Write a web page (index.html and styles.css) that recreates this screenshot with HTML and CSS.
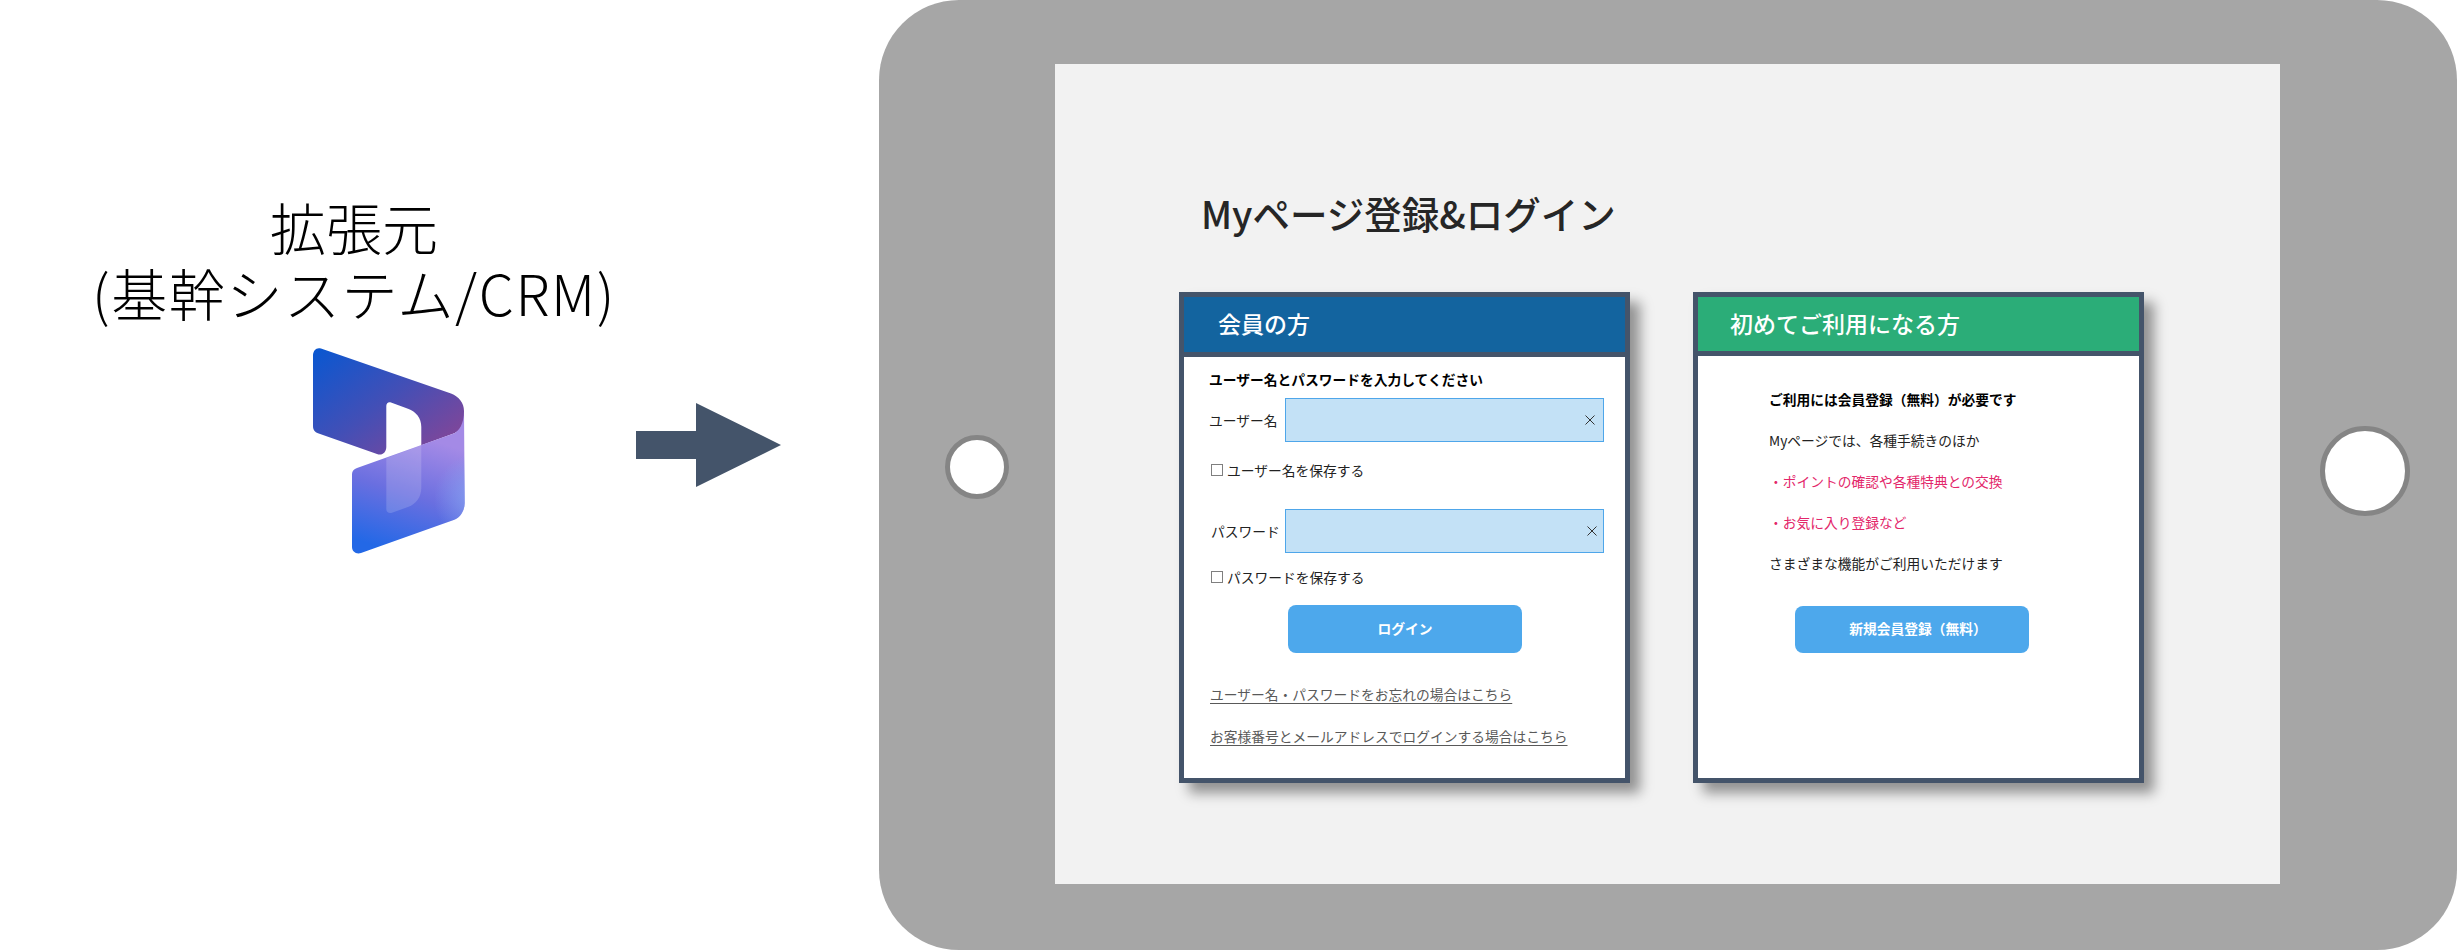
FILE: index.html
```html
<!DOCTYPE html>
<html lang="ja">
<head>
  <meta charset="UTF-8">
  <meta name="viewport" content="width=device-width, initial-scale=1.0">
  <title>Myページ登録&amp;ログイン</title>
  <link rel="stylesheet" href="styles.css">
</head>
<body>
  <div class="source">
    <p class="source-label">拡張元</p>
    <p class="source-label source-sub">(基幹システム/CRM)</p>
    <svg class="logo" width="152" height="206" viewBox="0 0 152 206">
      <defs>
        <linearGradient id="logoTop" gradientUnits="userSpaceOnUse" x1="5" y1="2" x2="95" y2="118">
          <stop offset="0" stop-color="#0b57d0"/>
          <stop offset="0.55" stop-color="#434fb6"/>
          <stop offset="1" stop-color="#7a479c"/>
        </linearGradient>
        <linearGradient id="logoBottom" gradientUnits="userSpaceOnUse" x1="105" y1="88" x2="70" y2="200">
          <stop offset="0" stop-color="#a48ae6"/>
          <stop offset="0.5" stop-color="#6a6fe0"/>
          <stop offset="1" stop-color="#2368e6"/>
        </linearGradient>
        <radialGradient id="logoEdge" gradientUnits="userSpaceOnUse" cx="166" cy="150" r="45">
          <stop offset="0" stop-color="#84a8f4" stop-opacity="0.85"/>
          <stop offset="1" stop-color="#84a8f4" stop-opacity="0"/>
        </radialGradient>
      </defs>
      <path fill="url(#logoTop)" d="M0 7.5C0 2.5 3.5 -1 8 0.5L138 45.5C146 48.5 151 55 151 63V70C151 78 146 83.5 140 85.7L108.3 97.3V79C108.3 70 103 63.5 95 60.7L78 54.5C75.5 53.7 73.3 55 73.3 58V99C73.3 104.5 69 108 64 106L5 85.2C2 84 0 82 0 78Z"/>
      <path fill="url(#logoBottom)" d="M39 126C39 123 41 121 44 120L140 85.7C146 83.5 151 76 151 63L151.7 155C151.7 163 147 170 140 172.3L48 205C43 206.5 39 203.5 39 199Z"/>
      <path fill="url(#logoEdge)" d="M100 100L140 85.7C146 83.5 151 76 151 63L151.7 155C151.7 163 147 170 140 172.3L100 186Z"/>
      <path fill="#fff" fill-opacity="0.16" d="M73.3 110L108.3 97.3V140C108.3 149 103 156 95 159L79 164.7C76 165.7 73.3 164 73.3 161Z"/>
    </svg>
  </div>

  <svg class="arrow" width="145" height="84" viewBox="0 0 145 84">
    <path fill="#44546a" d="M0 28H60V0L145 42L60 84V56H0Z"/>
  </svg>

  <div class="tablet">
    <div class="hole hole-small"></div>
    <main class="screen">
      <h1 class="page-title">Myページ登録&amp;ログイン</h1>
      <div class="cards">
        <section class="card">
          <h2 class="card-head head-member">会員の方</h2>
          <div class="card-body body-member">
            <p class="lead">ユーザー名とパスワードを入力してください</p>
            <div class="form-row row-user">
              <label class="form-label">ユーザー名</label>
              <div class="field">
                <svg class="clear" width="10" height="10" viewBox="0 0 10 10"><path d="M0.5 0.5L9.5 9.5M9.5 0.5L0.5 9.5"/></svg>
              </div>
            </div>
            <div class="save save-user"><span class="box"></span>ユーザー名を保存する</div>
            <div class="form-row row-pass">
              <label class="form-label label-pass">パスワード</label>
              <div class="field field-pass">
                <svg class="clear" width="10" height="10" viewBox="0 0 10 10"><path d="M0.5 0.5L9.5 9.5M9.5 0.5L0.5 9.5"/></svg>
              </div>
            </div>
            <div class="save save-pass"><span class="box"></span>パスワードを保存する</div>
            <a class="btn btn-login" href="#">ログイン</a>
            <a class="link link-first" href="#">ユーザー名・パスワードをお忘れの場合はこちら</a>
            <a class="link link-second" href="#">お客様番号とメールアドレスでログインする場合はこちら</a>
          </div>
        </section>

        <section class="card">
          <h2 class="card-head head-new">初めてご利用になる方</h2>
          <div class="card-body body-new">
            <p class="lead">ご利用には会員登録（無料）が必要です</p>
            <p>Myページでは、各種手続きのほか</p>
            <p class="pink">・ポイントの確認や各種特典との交換</p>
            <p class="pink">・お気に入り登録など</p>
            <p>さまざまな機能がご利用いただけます</p>
            <a class="btn btn-new" href="#">新規会員登録（無料）</a>
          </div>
        </section>
      </div>
    </main>
    <div class="hole hole-large"></div>
  </div>
</body>
</html>
```

FILE: styles.css
```css
body {
  margin: 0;
  height: 950px;
  overflow: hidden;
  display: flex;
  align-items: flex-start;
  background-color: #fff;
  font-family: "Noto Sans CJK JP", "Noto Sans", sans-serif;
}

p, h1, h2 {
  margin: 0;
}

/* Left side: source system */
.source {
  width: 564px;
  flex: none;
  padding: 193px 0 0 72px;
  display: flex;
  flex-direction: column;
}

.source-label {
  font-size: 56px;
  font-weight: 200;
  line-height: 66px;
  text-align: center;
  color: #000;
  white-space: nowrap;
}

.source-sub {
  letter-spacing: 1.6px;
}

.logo {
  display: block;
  margin: 23px 0 0 241px;
}

.arrow {
  flex: none;
  display: block;
  margin-top: 403px;
}

/* Tablet frame */
.tablet {
  flex: none;
  width: 1578px;
  height: 950px;
  margin-left: 98px;
  box-sizing: border-box;
  padding: 64px 0 66px;
  display: flex;
  align-items: center;
  background-color: #a6a6a6;
  border-radius: 80px;
}

.hole {
  flex: none;
  box-sizing: border-box;
  background-color: #fff;
  border: 5px solid #858585;
  border-radius: 50%;
}

.hole-small {
  width: 64px;
  height: 64px;
  margin: 0 46px 14px 66px;
}

.hole-large {
  width: 90px;
  height: 90px;
  margin: 0 0 6px 40px;
}

.screen {
  flex: none;
  width: 1225px;
  height: 820px;
  background-color: #f2f2f2;
  box-sizing: border-box;
  padding: 123px 0 0 124px;
}

.page-title {
  margin-left: 22px;
  font-size: 37.5px;
  font-weight: 500;
  line-height: 52px;
  color: #262626;
}

.cards {
  display: flex;
  gap: 63px;
  margin-top: 53px;
}

.card {
  width: 451px;
  height: 491px;
  box-sizing: border-box;
  border: 5px solid #44546a;
  background-color: #fff;
  box-shadow: 10px 10px 12px rgba(0, 0, 0, 0.4);
}

.card-head {
  box-sizing: content-box;
  border-bottom: 5px solid #44546a;
  font-size: 23px;
  font-weight: 500;
  color: #fff;
}

.head-member {
  height: 55px;
  line-height: 53px;
  padding-left: 34px;
  background-color: #13649f;
}

.head-new {
  height: 54px;
  line-height: 52px;
  padding-left: 32px;
  background-color: #2bad78;
}

.card-body {
  font-size: 13.75px;
  line-height: 20px;
  color: #222;
}

.body-member {
  padding: 12px 0 0 25px;
}

.body-new {
  padding: 33px 0 0 71px;
}

.body-new p + p {
  margin-top: 21px;
}

.lead {
  font-weight: 700;
  color: #000;
}

.pink {
  color: #e3266a;
}

.form-row {
  display: flex;
  align-items: center;
}

.row-user {
  margin-top: 9px;
}

.row-pass {
  margin-top: 29px;
}

.form-label {
  width: 76px;
  flex: none;
}

.label-pass {
  width: 74px;
  padding-left: 2px;
}

.field {
  width: 319px;
  height: 44px;
  box-sizing: border-box;
  padding-right: 8px;
  display: flex;
  align-items: center;
  justify-content: flex-end;
  background-color: #c3e1f6;
  border: 1px solid #4ea6ea;
}

.field-pass {
  padding-right: 6px;
}

.clear path {
  fill: none;
  stroke: #333;
  stroke-width: 1;
}

.save {
  display: flex;
  align-items: center;
  gap: 4px;
  margin-left: 2px;
}

.save-user {
  margin-top: 18px;
}

.save-pass {
  margin-top: 14px;
}

.box {
  width: 12px;
  height: 12px;
  box-sizing: border-box;
  border: 1px solid #7f7f7f;
}

.btn {
  display: block;
  width: 234px;
  height: 48px;
  font-weight: 700;
  line-height: 47px;
  text-align: center;
  text-decoration: none;
  color: #fff;
  background-color: #4da8ec;
  border-radius: 8px;
}

.btn-login {
  margin: 18px 0 0 79px;
}

.btn-new {
  box-sizing: border-box;
  height: 47px;
  line-height: 45px;
  padding-left: 12px;
  margin: 33px 0 0 26px;
}

.link {
  display: block;
  width: fit-content;
  margin-left: 1px;
  color: #595959;
  text-underline-offset: 3px;
}

.link-first {
  margin-top: 31px;
}

.link-second {
  margin-top: 22px;
}
```
